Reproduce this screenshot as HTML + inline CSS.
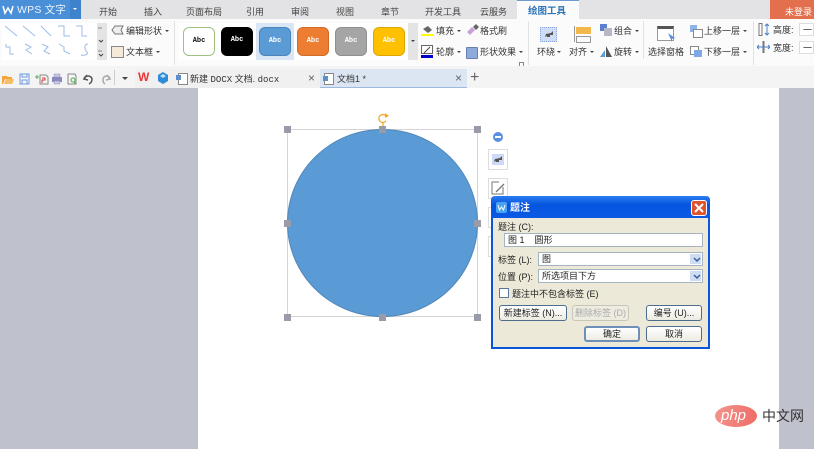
<!DOCTYPE html>
<html lang="zh"><head><meta charset="utf-8"><style>
html,body{margin:0;padding:0}
body{width:814px;height:449px;overflow:hidden;position:relative;background:#bfc1cd;font:9px/12px "Liberation Sans","Noto Sans CJK SC",sans-serif;color:#333;filter:blur(.3px)}
.a,.t,svg.a{position:absolute}
.t{white-space:nowrap;line-height:12px}
.tab{position:absolute;top:6px;font-size:9px;color:#444;line-height:12px;white-space:nowrap}
.sw{position:absolute;top:27px;width:32px;height:29px;border-radius:6px;box-sizing:border-box;font:bold 7px/27px "Liberation Mono",monospace;text-align:center;color:#fff}
.dd{position:absolute;width:0;height:0;border-left:2px solid transparent;border-right:2px solid transparent;border-top:2px solid #444}
.h{position:absolute;width:7px;height:7px;background:#999ba8}
.btn{position:absolute;box-sizing:border-box;height:16px;border:1px solid #4d6d8f;border-radius:3px;background:linear-gradient(#fff,#ecebe2);text-align:center;font-size:9px;line-height:14px;color:#222}
.inp{position:absolute;box-sizing:border-box;border:1px solid #a4b4c2;background:#fff;height:14px;font-size:9px;line-height:12px;padding-left:3px;color:#222}
.arr{position:absolute;right:1px;top:1px;width:11px;height:10px;background:#cfdcf3}
</style></head><body>
<!-- tab bar -->
<div class="a" style="left:0;top:0;width:814px;height:19px;background:#e3e3e5"></div>
<div class="a" style="left:0;top:0;width:81px;height:19px;background:#4a90d9"></div>
<div class="a" style="left:70px;top:0;width:11px;height:19px;background:#3d82cc"></div>
<div class="dd" style="left:73px;top:8px;border-top-color:#fff"></div>
<svg class="a" style="left:2px;top:4px" width="12" height="11" viewBox="0 0 12 11"><path d="M1 2l2 7 3-5 3 5 2-7" fill="none" stroke="#fff" stroke-width="1.6"/></svg>
<div class="t" style="left:17px;top:4px;color:#fff;font-size:10.5px;opacity:.9;letter-spacing:.2px">WPS 文字</div>
<div class="tab" style="left:99px">开始</div><div class="tab" style="left:144px">插入</div><div class="tab" style="left:186px">页面布局</div><div class="tab" style="left:246px">引用</div><div class="tab" style="left:291px">审阅</div><div class="tab" style="left:336px">视图</div><div class="tab" style="left:381px">章节</div><div class="tab" style="left:425px">开发工具</div><div class="tab" style="left:480px">云服务</div>
<div class="a" style="left:517px;top:0;width:62px;height:20px;background:#fbfbfb;border-top:1px solid #6d9bd1;box-sizing:border-box"></div>
<div class="tab" style="left:528px;color:#2f75b9;font-weight:bold;font-size:9.5px">绘图工具</div>
<div class="a" style="left:770px;top:0;width:44px;height:19px;background:#e2704f"></div>
<div class="tab" style="left:785px;color:#fff">未登录</div>
<!-- ribbon -->
<div class="a" style="left:0;top:19px;width:814px;height:47px;background:#fbfbfb"></div>
<div class="a" style="left:2px;top:23px;width:95px;height:37px;background:#fff"></div>
<div class="a" style="left:97px;top:23px;width:10px;height:37px;background:#e4e4e4"></div>
<svg class="a" style="left:0;top:20px" width="110" height="42" viewBox="0 0 110 42" fill="none" stroke="#9dbde6" stroke-width="1">
<path d="M5 6l12 10M23 6l12 10M41 6l10 10M58 6h6v10h6M76 6h6v10h5M6 24v3h4v7h4M25 24l6 3-5 3 6 4M42 24l6 3-4 4 6 3M59 24l5 3v4l6 3M88 24c-5 0-3 6-1 8s-2 4-6 3"/>
<path d="M98 8h4M98 31h4" stroke="#888"/><path d="M99 20l2 2 2-2M99 34l2 2 2-2" stroke="#444"/></svg>
<svg class="a" style="left:111px;top:25px" width="13" height="11" viewBox="0 0 13 11"><path d="M1 5l3-4h8l-2 4 2 4H4z" fill="#eee" stroke="#777"/></svg>
<div class="t" style="left:126px;top:25px">编辑形状</div><div class="dd" style="left:165px;top:30px"></div>
<div class="a" style="left:111px;top:46px;width:11px;height:10px;background:#f5e9d8;border:1px solid #888"></div>
<div class="t" style="left:126px;top:46px">文本框</div><div class="dd" style="left:156px;top:51px"></div>
<div class="a" style="left:174px;top:21px;width:1px;height:44px;background:#e2e2e2"></div>
<div class="a" style="left:179px;top:23px;width:238px;height:37px;background:#fff"></div>
<div class="a" style="left:256px;top:23px;width:38px;height:37px;background:#d9e6f6"></div>
<div class="a" style="left:408px;top:23px;width:10px;height:37px;background:#e4e4e4"></div>
<div class="dd" style="left:411px;top:40px;border-left-width:2.5px;border-right-width:2.5px"></div>
<div class="sw" style="left:183px;background:#fff;border:1px solid #9dc183;color:#111">Abc</div>
<div class="sw" style="left:221px;background:#000">Abc</div>
<div class="sw" style="left:259px;background:#5b9bd5;border:1px solid #4a84bb">Abc</div>
<div class="sw" style="left:297px;background:#ed7d31;border:1px solid #cf6c2a">Abc</div>
<div class="sw" style="left:335px;background:#a5a5a5;border:1px solid #8f8f8f">Abc</div>
<div class="sw" style="left:373px;background:#ffc000;border:1px solid #dca800">Abc</div>
<svg class="a" style="left:421px;top:24px" width="14" height="12"><path d="M2 5l5-3 4 4-4 3z" fill="#666"/><path d="M0 10h13v2H0z" fill="#ff0"/></svg>
<div class="t" style="left:436px;top:25px">填充</div><div class="dd" style="left:457px;top:30px"></div>
<svg class="a" style="left:466px;top:24px" width="13" height="12"><path d="M1 8l5-5 3 3-5 5z" fill="#c9a0dc"/><path d="M7 3l3-3 3 3-3 3z" fill="#666"/></svg>
<div class="t" style="left:480px;top:25px">格式刷</div>
<svg class="a" style="left:421px;top:45px" width="14" height="13"><rect x=".5" y=".5" width="11" height="8" fill="#fff" stroke="#666"/><path d="M3 8l6-6" stroke="#444"/><path d="M0 10h12v3H0z" fill="#00c"/></svg>
<div class="t" style="left:436px;top:46px">轮廓</div><div class="dd" style="left:457px;top:51px"></div>
<div class="a" style="left:466px;top:47px;width:10px;height:10px;background:#8ea9dc;border:1px solid #667fb5;border-radius:1px"></div>
<div class="t" style="left:480px;top:46px">形状效果</div><div class="dd" style="left:519px;top:51px"></div>
<div class="a" style="left:519px;top:62px;width:3px;height:3px;border:1px solid #888"></div>
<div class="a" style="left:528px;top:21px;width:1px;height:44px;background:#e2e2e2"></div>
<div class="a" style="left:540px;top:27px;width:17px;height:15px;background:#cfdcf5;border:1px dotted #8aa6d8;box-sizing:border-box"></div>
<svg class="a" style="left:544px;top:30px" width="10" height="9"><path d="M1 7l1-3 5-1 2-2v4l-3 0v2H3V6z" fill="#555"/></svg>
<div class="t" style="left:537px;top:46px">环绕</div><div class="dd" style="left:557px;top:51px"></div>
<div class="a" style="left:574px;top:26px;width:1px;height:16px;background:#999"></div>
<div class="a" style="left:576px;top:27px;width:15px;height:7px;background:#f2b84b"></div>
<div class="a" style="left:576px;top:36px;width:13px;height:5px;border:1px solid #999"></div>
<div class="t" style="left:569px;top:46px">对齐</div><div class="dd" style="left:590px;top:51px"></div>
<div class="a" style="left:600px;top:24px;width:7px;height:7px;background:#5b7fd0"></div><div class="a" style="left:604px;top:28px;width:8px;height:8px;background:#b8b8c4"></div>
<div class="t" style="left:614px;top:25px">组合</div><div class="dd" style="left:635px;top:30px"></div>
<svg class="a" style="left:600px;top:46px" width="13" height="11"><path d="M0 11l5-7v7z" fill="#5b9bd5"/><path d="M6 0l6 11H6z" fill="#555"/></svg>
<div class="t" style="left:614px;top:46px">旋转</div><div class="dd" style="left:635px;top:51px"></div>
<div class="a" style="left:643px;top:21px;width:1px;height:38px;background:#e2e2e2"></div>
<div class="a" style="left:657px;top:26px;width:17px;height:15px;background:#fff;border:1px solid #999;border-top:3px solid #555;box-sizing:border-box"></div>
<svg class="a" style="left:667px;top:33px" width="9" height="10"><path d="M1 0l7 5-3 1 0 3z" fill="#5b8fd8"/></svg>
<div class="t" style="left:648px;top:46px">选择窗格</div>
<div class="a" style="left:690px;top:25px;width:7px;height:7px;background:#8cb4e8"></div><div class="a" style="left:693px;top:29px;width:8px;height:7px;background:#fff;border:1px solid #888"></div>
<div class="t" style="left:704px;top:25px">上移一层</div><div class="dd" style="left:743px;top:30px"></div>
<div class="a" style="left:690px;top:46px;width:7px;height:7px;background:#fff;border:1px solid #888"></div><div class="a" style="left:694px;top:50px;width:8px;height:7px;background:#7ea8e8"></div>
<div class="t" style="left:704px;top:46px">下移一层</div><div class="dd" style="left:743px;top:51px"></div>
<div class="a" style="left:753px;top:21px;width:1px;height:44px;background:#e2e2e2"></div>
<svg class="a" style="left:758px;top:23px" width="12" height="13" fill="none"><path d="M1 .5h3v12H1z" stroke="#777"/><path d="M9 1v11M7 3l2-2 2 2M7 10l2 2 2-2" stroke="#4a80c8"/></svg>
<div class="t" style="left:773px;top:24px">高度:</div>
<svg class="a" style="left:757px;top:41px" width="13" height="12" fill="none"><path d="M6.500 0v12" stroke="#777" stroke-width="2"/><path d="M0 6h13M2 4L0 6l2 2M11 4l2 2-2 2" stroke="#4a80c8"/></svg>
<div class="t" style="left:773px;top:42px">宽度:</div>
<div class="a" style="left:799px;top:23px;width:15px;height:13px;background:#fff;border:1px solid #ddd;box-sizing:border-box"></div>
<div class="a" style="left:799px;top:41px;width:15px;height:13px;background:#fff;border:1px solid #ddd;box-sizing:border-box"></div>
<div class="t" style="left:803px;top:24px">一</div><div class="t" style="left:803px;top:42px">一</div>
<!-- quick access -->
<div class="a" style="left:0;top:66px;width:814px;height:22px;background:#f4f4f4"></div>
<div class="a" style="left:135px;top:69px;width:185px;height:19px;background:#f0f0f0"></div>
<div class="a" style="left:320px;top:69px;width:147px;height:19px;background:#dce6f2;border-bottom:1px solid #9dbbdc;box-sizing:border-box"></div>
<svg class="a" style="left:2px;top:73px" width="110" height="12" fill="none">
<path d="M0 3h5l1 1h4v2H3l-2 5H0z" fill="#f6a33c"/><path d="M2 11l2-5h8l-2 5z" fill="#f9be63"/>
<path d="M18 1h9v10H18z" stroke="#6f9be0"/><path d="M20 1h5v3h-5zM20 7h5v4h-5z" stroke="#6f9be0"/>
<path d="M38 2h6l2 2v7h-8z" stroke="#888"/><path d="M33 4h4M35 2v4" stroke="#5ab05a"/><path d="M40 5h3v2h-3v3" stroke="#d33"/>
<path d="M50 4h10v5H50z" fill="#8a8bbd"/><path d="M52 1h6v3h-6zM52 8h6v3h-6z" fill="#c8c8e0" stroke="#8a8bbd" stroke-width=".5"/>
<path d="M66 1h7l1 2v8h-8z" stroke="#888"/><circle cx="71" cy="7" r="2" stroke="#4caf50"/><path d="M72 9l2 2" stroke="#4caf50"/>
<path d="M82 6c1-4 7-4 8 0 0 2-1 4-3 5M85 2l-3 4 4 1" stroke="#555" stroke-width="1.5"/>
<path d="M108 6c-1-4-6-4-7 0 0 2 0 4 2 5M105 2l3 4-4 1" stroke="#aaa" stroke-width="1.5"/>
</svg>
<div class="a" style="left:114px;top:70px;width:1px;height:15px;background:#ccc"></div>
<div class="dd" style="left:122px;top:77px;border-left-width:3.5px;border-right-width:3.5px;border-top-width:3px"></div>
<div class="t" style="left:138px;top:71px;color:#e33;font:bold 12px/13px 'Liberation Sans',sans-serif">W</div>
<svg class="a" style="left:157px;top:72px" width="12" height="12"><path d="M6 0l5 3v6l-5 3-5-3V3z" fill="#2e8bd8"/><path d="M3 4l3 2 3-2-3-2z" fill="#bfe0fa"/></svg>
<div class="a" style="left:178px;top:73px;width:8px;height:10px;background:#fff;border:1px solid #888"></div><div class="a" style="left:176px;top:75px;width:5px;height:5px;background:#5b8fc8"></div>
<div class="t" style="left:190px;top:73px;font-size:9px">新建 <span style="font-family:'Liberation Mono',monospace">DOCX</span> 文档. <span style="font-family:'Liberation Mono',monospace">docx</span></div>
<div class="t" style="left:308px;top:72px;font-size:12px;color:#666">×</div>
<div class="a" style="left:324px;top:73px;width:8px;height:10px;background:#fff;border:1px solid #888"></div><div class="a" style="left:323px;top:76px;width:5px;height:5px;background:#5b8fc8"></div>
<div class="t" style="left:337px;top:73px;font-size:9px">文档1 *</div>
<div class="t" style="left:455px;top:72px;font-size:12px;color:#666">×</div>
<div class="t" style="left:470px;top:72px;font-size:16px;color:#666">+</div>
<!-- page -->
<div class="a" style="left:198px;top:88px;width:581px;height:361px;background:#fff"></div>
<div class="a" style="left:779px;top:88px;width:35px;height:361px;background:#bfc1cd"></div>
<!-- shape -->
<div class="a" style="left:287px;top:129px;width:191px;height:188px;box-sizing:border-box;border:1px solid #d4d4d6"></div>
<div class="a" style="left:287px;top:129px;width:191px;height:188px;border-radius:50%;background:#5b9bd5;box-sizing:border-box;border:1px solid #5287b8"></div>
<div class="h" style="left:284px;top:126px"></div><div class="h" style="left:379px;top:126px"></div><div class="h" style="left:474px;top:126px"></div>
<div class="h" style="left:284px;top:220px"></div><div class="h" style="left:474px;top:220px"></div>
<div class="h" style="left:284px;top:314px"></div><div class="h" style="left:379px;top:314px"></div><div class="h" style="left:474px;top:314px"></div>
<svg class="a" style="left:377px;top:112px" width="13" height="15" fill="none"><path d="M9 4a4 4 0 1 0 0 5M6 10v4" stroke="#f5a623" stroke-width="1.3"/><path d="M8 1l4 3-4 2z" fill="#f5a623"/></svg>
<div class="a" style="left:493px;top:132px;width:10px;height:10px;border-radius:50%;background:#5b8fe0"></div><div class="a" style="left:495px;top:136px;width:6px;height:2px;background:#fff"></div>
<div class="a" style="left:488px;top:149px;width:20px;height:21px;background:#fff;border:1px solid #ddd;box-sizing:border-box"></div>
<div class="a" style="left:492px;top:154px;width:12px;height:11px;background:#cdd9f6"></div>
<svg class="a" style="left:494px;top:156px" width="9" height="7"><path d="M0 6l1-3 5-1 2-2v4H5v2H2V5z" fill="#555"/></svg>
<div class="a" style="left:488px;top:178px;width:20px;height:21px;background:#fff;border:1px solid #ddd;box-sizing:border-box"></div>
<svg class="a" style="left:491px;top:181px" width="15" height="15" fill="none"><path d="M12 6v7H1V1h7" stroke="#777"/><path d="M5 11l8-8" stroke="#777" stroke-width="1.3"/></svg>
<div class="a" style="left:488px;top:207px;width:5px;height:21px;background:#fff;border:1px solid #ddd;box-sizing:border-box"></div>
<div class="a" style="left:488px;top:236px;width:5px;height:21px;background:#fff;border:1px solid #ddd;box-sizing:border-box"></div>
<!-- dialog -->
<div class="a" style="left:491px;top:196px;width:219px;height:153px;background:#ece9d8;border:2px solid #0a55d8;border-top:0;border-radius:4px 4px 0 0;box-sizing:border-box"></div>
<div class="a" style="left:491px;top:196px;width:219px;height:22px;background:linear-gradient(#2a7cf0,#0655e0 40%,#0a5ae6);border-radius:5px 5px 0 0"></div>
<div class="a" style="left:496px;top:202px;width:11px;height:11px;background:#4aa3f0;border-radius:2px"></div>
<svg class="a" style="left:497px;top:204px" width="9" height="7"><path d="M1 1l1.500 5 2-3 2 3L8 1" fill="none" stroke="#fff"/></svg>
<div class="t" style="left:510px;top:203px;color:#fff;font-size:10px;font-weight:bold">题注</div>
<div class="a" style="left:691px;top:200px;width:16px;height:16px;background:#e0532f;border:1px solid #fff;border-radius:3px;box-sizing:border-box"></div>
<svg class="a" style="left:694px;top:203px" width="10" height="10"><path d="M1 1l8 8M9 1l-8 8" stroke="#fff" stroke-width="2"/></svg>
<div class="t" style="left:498px;top:221px;font-size:9px;color:#222">题注 (C):</div>
<div class="inp" style="left:504px;top:233px;width:199px">图 1 &nbsp; &nbsp;圆形</div>
<div class="t" style="left:498px;top:254px;font-size:9px;color:#222">标签 (L):</div>
<div class="inp" style="left:538px;top:252px;width:165px">图<div class="arr"></div></div>
<div class="t" style="left:498px;top:271px;font-size:9px;color:#222">位置 (P):</div>
<div class="inp" style="left:538px;top:269px;width:165px">所选项目下方<div class="arr"></div></div>
<svg class="a" style="left:692px;top:255px" width="10" height="30" fill="none"><path d="M2 3l3 3 3-3M2 20l3 3 3-3" stroke="#3b5f9a" stroke-width="1.500"/></svg>
<div class="a" style="left:499px;top:288px;width:10px;height:10px;background:#fff;border:1px solid #5a7a9a;box-sizing:border-box"></div>
<div class="t" style="left:512px;top:288px;font-size:9px;color:#222">题注中不包含标签 (E)</div>
<div class="btn" style="left:499px;top:305px;width:68px">新建标签 (N)...</div>
<div class="btn" style="left:572px;top:305px;width:57px;border-color:#c8c6b8;color:#aaa;background:#eeece0">删除标签 (D)</div>
<div class="btn" style="left:646px;top:305px;width:56px">编号 (U)...</div>
<div class="btn" style="left:584px;top:326px;width:56px;border:2px solid #6e8fb8;line-height:12px">确定</div>
<div class="btn" style="left:646px;top:326px;width:56px">取消</div>
<!-- watermark -->
<div class="a" style="left:715px;top:405px;width:42px;height:22px;border-radius:50%;background:linear-gradient(100deg,#f4948e,#ef6b66)"></div>
<div class="t" style="left:721px;top:408px;color:#fff;font:italic 15px/15px 'Liberation Sans',sans-serif">php</div>
<div class="t" style="left:762px;top:409px;color:#333;font-size:14px;line-height:15px">中文网</div>
</body></html>
